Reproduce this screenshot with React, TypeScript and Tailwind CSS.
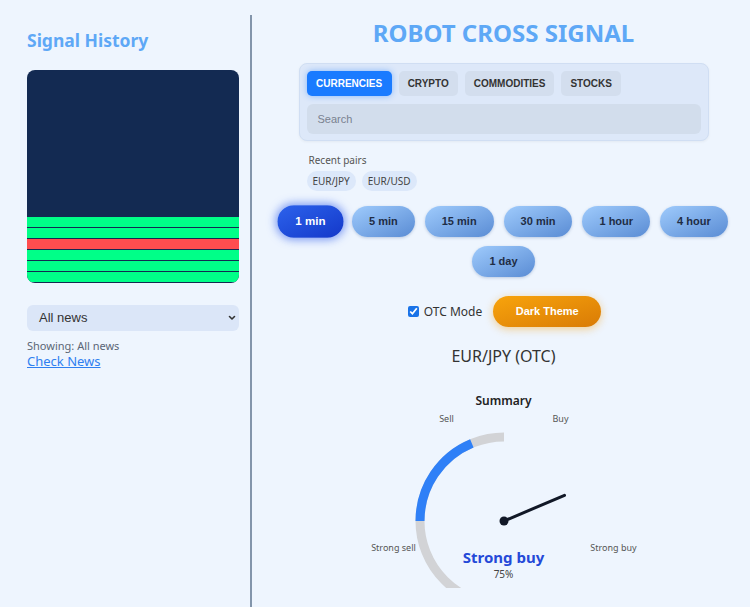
import React from "react";

const bars = ["g", "g", "r", "g", "g", "g"];
const times = ["1 min", "5 min", "15 min", "30 min", "1 hour", "4 hour", "1 day"];
const tabs = ["CURRENCIES", "CRYPTO", "COMMODITIES", "STOCKS"];

function Gauge() {
  return (
    <div className="relative w-[300px] h-[197px] overflow-hidden mt-[24px] font-['Noto_Sans',sans-serif]">
      <svg className="absolute left-0 top-0" width="300" height="240" viewBox="0 0 300 240">
        <path d="M 150 46 A 84 84 0 0 0 66 130 A 84 84 0 0 0 150 214" fill="none" stroke="#d2d3d6" strokeWidth="9" />
        <path d="M 117.85 52.4 A 84 84 0 0 0 66 130" fill="none" stroke="#2f80f7" strokeWidth="9" />
        <line x1="150" y1="130" x2="210.5" y2="104.3" stroke="#111827" strokeWidth="3" strokeLinecap="round" />
        <circle cx="150" cy="130" r="4.5" fill="#111827" />
      </svg>
      <div className="absolute left-0 right-0 top-[1px] text-center text-[12px] font-semibold text-[#222]">Summary</div>
      <div className="absolute left-[93px] top-[21px] -translate-x-1/2 text-[9px] text-[#555]">Sell</div>
      <div className="absolute left-[207px] top-[21px] -translate-x-1/2 text-[9px] text-[#555]">Buy</div>
      <div className="absolute left-[40px] top-[150px] -translate-x-1/2 whitespace-nowrap text-[9px] text-[#555]">Strong sell</div>
      <div className="absolute left-[260px] top-[150px] -translate-x-1/2 whitespace-nowrap text-[9px] text-[#555]">Strong buy</div>
      <div className="absolute left-0 right-0 top-[155px] text-center text-[15px] font-bold text-[#2449d8] leading-[22px]">Strong buy</div>
      <div className="absolute left-0 right-0 top-[176px] text-center text-[10px] text-[#444] leading-[14px]">75%</div>
    </div>
  );
}

export default function App() {
  return (
    <div className="flex w-[750px] h-[607px] overflow-hidden bg-[#eef5fe] font-['Noto_Sans',sans-serif]">
      {/* Left panel */}
      <aside className="w-[250px] shrink-0 pl-[27px] pr-[11px] pt-[27px]">
        <h2 className="text-[17.5px] leading-[26px] font-bold text-[#5ea8f6]">Signal History</h2>
        <div className="mt-[17px] w-[212px] h-[213px] rounded-[8px] bg-[#132a52] overflow-hidden flex flex-col justify-end gap-[1px] pb-[1px]">
          {bars.map((b, i) => (
            <div key={i} className={b === "g" ? "h-[10px] bg-[#00ff88]" : "h-[10px] bg-[#ff4d4f]"} />
          ))}
        </div>
        <div className="mt-[22px] w-[212px] h-[26px] rounded-[6px] bg-[#dbe6f8] flex items-center justify-between pl-[12px] pr-[2px] font-['Liberation_Sans',sans-serif] text-[13px] text-[#333]">
          <span>All news</span>
          <svg width="10" height="10" viewBox="0 0 10 10">
            <path d="M2.5 3.5 L5 6 L7.5 3.5" fill="none" stroke="#333" strokeWidth="1.6" strokeLinecap="round" strokeLinejoin="round" />
          </svg>
        </div>
        <div className="mt-[7px] text-[11px] leading-[15px] text-[#5b6676]">Showing: All news</div>
        <a href="#" className="block text-[13px] leading-[16px] text-[#2f7ff0] underline">Check News</a>
      </aside>

      {/* Right panel */}
      <main className="flex-1 mt-[15px] border-l-2 border-[#8395ab] pl-[5px] flex flex-col items-center">
        <h1 className="mt-[2px] text-[24px] leading-[32px] font-bold text-[#5ea8f6]">ROBOT CROSS SIGNAL</h1>

        <div className="mt-[14px] w-[410px] rounded-[8px] bg-[#dde8f9] border border-[#d0def3] shadow-[0_1px_3px_rgba(0,0,0,0.05)] px-[7px] pt-[7px] pb-[6px]">
          <div className="flex gap-[7px] font-['Liberation_Sans',sans-serif]">
            {tabs.map((t, i) => (
              <div
                key={t}
                className={
                  i === 0
                    ? "h-[25px] px-[9.5px] rounded-[5px] bg-[#1a7bff] text-white text-[10px] font-bold flex items-center shadow-[0_0_6px_rgba(26,123,255,0.45)]"
                    : "h-[25px] px-[9px] rounded-[5px] bg-[#d3deee] text-[#333] text-[10px] font-bold flex items-center"
                }
              >
                {t}
              </div>
            ))}
          </div>
          <div className="mt-[8px] h-[30px] rounded-[6px] bg-[#d2ddec] flex items-center pl-[11px] font-['Liberation_Sans',sans-serif] text-[11px] text-[#7a8290]">
            Search
          </div>
        </div>

        <div className="w-[410px] px-[8px] mt-[12px]">
          <div className="pl-[2px] text-[10px] leading-[14px] text-[#555]">Recent pairs</div>
          <div className="mt-[4px] flex gap-[6px]">
            <div className="h-[20px] px-[6px] rounded-full bg-[#dce8fa] text-[10px] text-[#444] flex items-center">EUR/JPY</div>
            <div className="h-[20px] px-[6px] rounded-full bg-[#dce8fa] text-[10px] text-[#444] flex items-center">EUR/USD</div>
          </div>
        </div>

        <div className="mt-[15px] w-[480px] flex flex-wrap justify-center gap-x-[10px] gap-y-[9px] font-['Liberation_Sans',sans-serif]">
          {times.map((t, i) => (
            <div
              key={t}
              className={
                i === 0
                  ? "h-[31px] px-[17px] rounded-full bg-gradient-to-br from-[#2d62ec] to-[#1537c9] text-white text-[11px] font-bold flex items-center scale-105 shadow-[0_0_8px_2px_rgba(37,84,235,0.55)]"
                  : "h-[31px] px-[17px] rounded-full bg-gradient-to-br from-[#9fcbfc] to-[#5a8cd4] text-[#1f2d45] text-[11px] font-bold flex items-center shadow-[0_1px_3px_rgba(40,80,140,0.25)]"
              }
            >
              {t}
            </div>
          ))}
        </div>

        <div className="mt-[19px] flex items-center ml-[2px]">
          <input type="checkbox" defaultChecked className="w-[11px] h-[11px] accent-[#1a73e8]" />
          <span className="ml-[5px] text-[12px] text-[#333]">OTC Mode</span>
          <div className="ml-[11px] h-[31px] w-[108px] rounded-full bg-gradient-to-br from-[#f8a40c] to-[#d97b06] text-white text-[11px] font-bold font-['Liberation_Sans',sans-serif] flex items-center justify-center shadow-[0_2px_8px_rgba(245,158,11,0.45)]">
            Dark Theme
          </div>
        </div>

        <div className="mt-[18px] text-[16px] leading-[22px] text-[#333]">EUR/JPY (OTC)</div>

        <Gauge />
      </main>
    </div>
  );
}
